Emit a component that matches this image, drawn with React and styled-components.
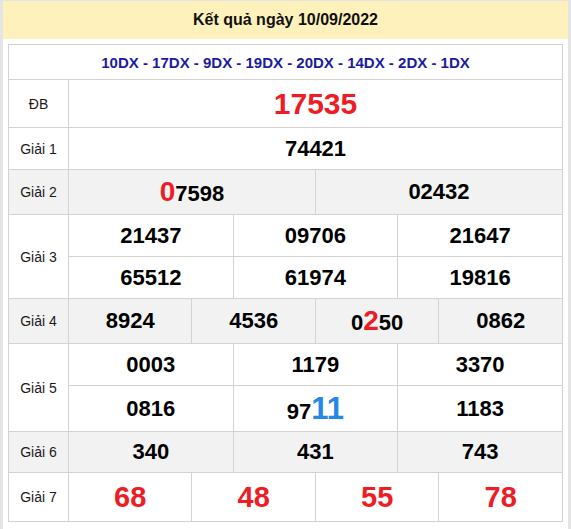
import React from 'react';
import styled, { createGlobalStyle } from 'styled-components';

const GlobalStyle = createGlobalStyle`
	body {
		margin: 0;
		background: #e4e4e4;
		font-family: 'Liberation Sans', Arial, sans-serif;
	}
`;

const results = [
	{ label: 'Giải 1', lines: [[['74421']]], height: [42] },
	{ label: 'Giải 2', lines: [[[{ hl: '0' }, '7598'], ['02432']]], height: [45], gray: true },
	{ label: 'Giải 3', lines: [[['21437'], ['09706'], ['21647']], [['65512'], ['61974'], ['19816']]], height: [42, 42] },
	{ label: 'Giải 4', lines: [[['8924'], ['4536'], ['0', { hl: '2' }, '50'], ['0862']]], height: [45], gray: true },
	{ label: 'Giải 5', lines: [[['0003'], ['1179'], ['3370']], [['0816'], ['97', { hl: '11', blue: true }], ['1183']]], height: [42, 46] },
	{ label: 'Giải 6', lines: [[['340'], ['431'], ['743']]], height: [41], gray: true },
];

const Number = ({ parts }) => parts.map((p, i) => (
	typeof p === 'string'
		? <React.Fragment key={i}>{p}</React.Fragment>
		: <Mark key={i} $blue={p.blue}>{p.hl}</Mark>
));

const App = () => (
	<Page>
		<GlobalStyle />
		<Title>Kết quả ngày 10/09/2022</Title>

		<Table>
			<colgroup>
				<col style={{ width: 60 }} />
				{Array.from({ length: 12 }).map((_, i) => <col key={i} />)}
			</colgroup>
			<tbody>
				<tr>
					<Codes colSpan={13}>10DX - 17DX - 9DX - 19DX - 20DX - 14DX - 2DX - 1DX</Codes>
				</tr>
				<Row $h={48}>
					<Label>ĐB</Label>
					<Cell colSpan={12} $size={30} $red>17535</Cell>
				</Row>

				{results.map(({ label, lines, height, gray }) => lines.map((line, li) => (
					<Row key={label + li} $h={height[li]} $gray={gray}>
						{li === 0 && <Label rowSpan={lines.length}>{label}</Label>}
						{line.map((parts, ci) => (
							<Cell key={ci} colSpan={12 / line.length}>
								<Number parts={parts} />
							</Cell>
						))}
					</Row>
				)))}

				<Row $h={49}>
					<Label>Giải 7</Label>
					{['68', '48', '55', '78'].map((n) => (
						<Cell key={n} colSpan={3} $size={29} $red>{n}</Cell>
					))}
				</Row>
			</tbody>
		</Table>
	</Page>
);

const Page = styled.div`
	margin: 1px 3px 0;
	min-height: 528px;
	background: #fff;
	padding-bottom: 8px;
	box-sizing: border-box;
`;

const Title = styled.div`
	height: 38px;
	background: #fff1bb;
	display: flex;
	align-items: center;
	justify-content: center;
	font-size: 16px;
	font-weight: bold;
	color: #111;
	margin-bottom: 5px;
`;

const Table = styled.table`
	width: 555px;
	margin-left: 5px;
	border-collapse: collapse;
	table-layout: fixed;

	td {
		border: 1px solid #d6d3ce;
		padding: 0;
		text-align: center;
		vertical-align: middle;
	}
`;

const Codes = styled.td`
	height: 34px;
	font-size: 15px;
	font-weight: bold;
	color: #1b1ba3;
`;

const Row = styled.tr`
	background: ${(p) => (p.$gray ? '#f2f2f2' : '#fff')};

	td {
		height: ${(p) => p.$h - 1}px;
	}
`;

const Label = styled.td`
	font-size: 14px;
	color: #1a1a1a;
`;

const Cell = styled.td`
	font-size: ${(p) => p.$size || 22}px;
	font-weight: bold;
	color: ${(p) => (p.$red ? '#ee1c25' : '#000')};
	line-height: 1;
`;

const Mark = styled.span`
	font-size: ${(p) => (p.$blue ? 31 : 28)}px;
	color: ${(p) => (p.$blue ? '#2589e3' : '#ee1c25')};
`;

export default App;
